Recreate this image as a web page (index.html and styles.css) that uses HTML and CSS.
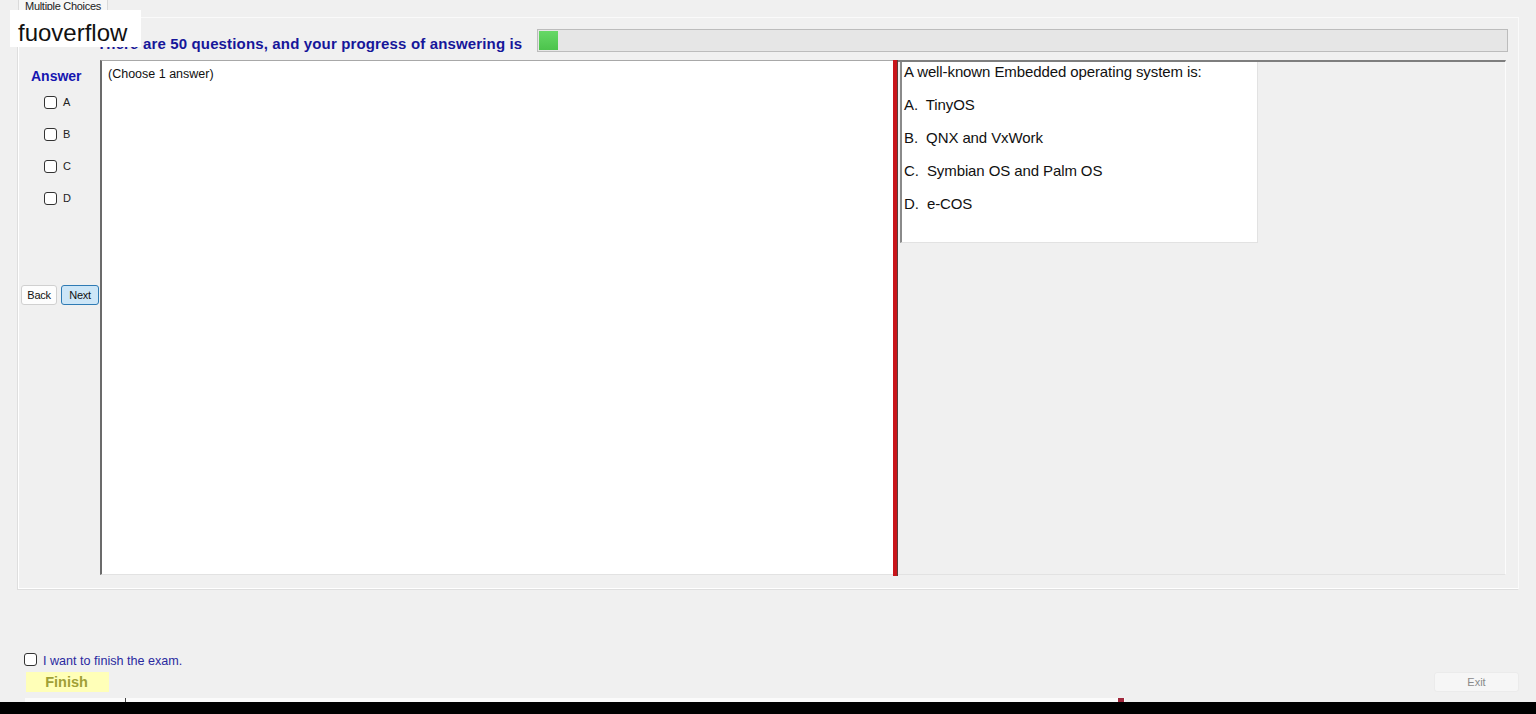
FILE: index.html
```html
<!DOCTYPE html>
<html>
<head>
<meta charset="utf-8">
<title>Multiple Choices</title>
<link rel="stylesheet" href="styles.css">
</head>
<body>
<div class="app">
  <div class="tabstrip"><div class="tab">Multiple Choices</div></div>
  <div class="tabpage">
    <div class="header">
      <div class="title">There are 50 questions, and your progress of answering is</div>
      <div class="progress"><div class="progress-fill" style="width:2%"></div></div>
    </div>
    <div class="main">
      <div class="answers">
        <div class="answer-title">Answer</div>
        <div class="opt"><span class="box"></span><span>A</span></div>
        <div class="opt"><span class="box"></span><span>B</span></div>
        <div class="opt"><span class="box"></span><span>C</span></div>
        <div class="opt"><span class="box"></span><span>D</span></div>
        <div class="nav">
          <button class="btn back">Back</button>
          <button class="btn next">Next</button>
        </div>
      </div>
      <div class="content">(Choose 1 answer)</div>
      <div class="splitter"></div>
      <div class="question-pane">
        <div class="question">
          <p>A well-known Embedded operating system is:</p>
          <p>A.&nbsp; TinyOS</p>
          <p>B.&nbsp; QNX and VxWork</p>
          <p>C.&nbsp; Symbian OS and Palm OS</p>
          <p>D.&nbsp; e-COS</p>
        </div>
      </div>
    </div>
  </div>
  <div class="footer">
    <div class="finish-check"><span class="box"></span><span class="finish-label">I want to finish the exam.</span></div>
    <div class="footer-buttons">
      <button class="finish">Finish</button>
      <button class="exit">Exit</button>
    </div>
  </div>
  <div class="strip"><span class="tick"></span><span class="dot"></span></div>
  <div class="blackbar"></div>
</div>
<div class="watermark">fuoverflow</div>
</body>
</html>
```
FILE: styles.css
```css
* { box-sizing: border-box; }
html, body { margin: 0; padding: 0; }
body {
  background: #f0f0f0;
  font-family: "Liberation Sans", Arial, sans-serif;
  width: 1536px;
  height: 714px;
  overflow: hidden;
  position: relative;
}
.app {
  display: flex;
  flex-direction: column;
  height: 714px;
}
.tabstrip {
  height: 17px;
  display: flex;
  align-items: flex-start;
}
.tab {
  margin-left: 18px;
  width: 90px;
  height: 15px;
  background: #f7f7f7;
  border: 1px solid #dadada;
  border-top: none;
  border-bottom: none;
  font-size: 11px;
  line-height: 12px;
  color: #222;
  text-align: center;
  letter-spacing: -0.3px;
  overflow: hidden;
}
.tabpage {
  margin-left: 17px;
  width: 1502px;
  height: 573px;
  border: 1px solid #fafafa;
  border-left-color: #dedede;
  border-bottom-color: #dedede;
  box-shadow: inset 1px 0 #fff, inset 0 -1px #fff;
  display: flex;
  flex-direction: column;
}
.header {
  display: flex;
  align-items: center;
  height: 23px;
  margin-top: 11px;
  padding-left: 79px;
  padding-right: 10px;
}
.title {
  flex: none;
  width: 440px;
  font-size: 15px;
  font-weight: bold;
  letter-spacing: 0.15px;
  color: #16169a;
  white-space: nowrap;
  margin-top: 6px;
}
.progress {
  flex: 1;
  height: 23px;
  background: #e6e6e6;
  border: 1px solid #bcbcbc;
  padding: 1px;
}
.progress-fill {
  height: 100%;
  background: linear-gradient(#66d866, #4cc34c);
}
.main {
  display: flex;
  margin-top: 8px;
  height: 515px;
  margin-right: 12px;
}
.answers {
  width: 82px;
  display: flex;
  flex-direction: column;
}
.answer-title {
  font-size: 14px;
  font-weight: bold;
  color: #1616b0;
  line-height: 18px;
  margin-top: 7px;
  margin-bottom: 1px;
  padding-left: 13px;
}
.opt {
  height: 32px;
  display: flex;
  align-items: center;
  padding-left: 26px;
  font-size: 11px;
  color: #222;
}
.box {
  display: inline-block;
  width: 13px;
  height: 13px;
  border: 1px solid #333;
  border-radius: 3px;
  background: #fff;
  margin-right: 6px;
  flex: none;
}
.nav {
  display: flex;
  gap: 4px;
  margin-top: 71px;
  padding-left: 3px;
}
.btn {
  height: 20px;
  padding: 0;
  font-family: "Liberation Sans", Arial, sans-serif;
  font-size: 11px;
  color: #111;
  border-radius: 3px;
  letter-spacing: -0.3px;
}
.back {
  width: 36px;
  background: #fdfdfd;
  border: 1px solid #d0d0d0;
}
.next {
  width: 38px;
  background: #cde6f7;
  border: 1px solid #2f7bb4;
}
.content {
  width: 793px;
  background: #fff;
  border-left: 2px solid #6b6b6b;
  border-top: 1px solid #a8a8a8;
  border-bottom: 1px solid #e2e2e2;
  font-size: 12.5px;
  color: #111;
  padding: 6px 0 0 6px;
  line-height: 14px;
}
.splitter {
  width: 5px;
  background: #c8151b;
  border-right: 1px solid #5e3a3a;
  height: 516px;
}
.question-pane {
  flex: 1;
  border-top: 2px solid #7e7e7e;
  border-right: 1px solid #fcfcfc;
  border-bottom: 1px solid #e2e2e2;
  padding-left: 2px;
}
.question {
  width: 358px;
  height: 181px;
  background: #fff;
  border-left: 2px solid #8a8a8a;
  border-right: 1px solid #e2e2e2;
  border-bottom: 1px solid #e2e2e2;
  padding: 1px 0 0 2px;
  font-size: 15px;
  letter-spacing: -0.1px;
  color: #111;
}
.question p {
  margin: 0 0 16px;
  line-height: 17px;
  white-space: nowrap;
}
.footer {
  height: 106px;
  display: flex;
  flex-direction: column;
  padding-top: 62px;
}
.finish-check {
  display: flex;
  align-items: center;
  padding-left: 24px;
  height: 14px;
}
.finish-label {
  font-size: 12.6px;
  color: #2a2aa0;
  margin-top: 3px;
}
.footer-buttons {
  display: flex;
  justify-content: space-between;
  margin-top: 6px;
  padding-left: 26px;
  padding-right: 17px;
}
.finish {
  width: 83px;
  height: 20px;
  background: #ffffb8;
  border: none;
  padding: 0 2px 0 0;
  font-family: "Liberation Sans", Arial, sans-serif;
  font-size: 14.5px;
  font-weight: bold;
  color: #a0a036;
}
.exit {
  width: 85px;
  height: 20px;
  background: #f6f6f6;
  border: 1px solid #ebebeb;
  border-radius: 3px;
  padding: 0;
  font-family: "Liberation Sans", Arial, sans-serif;
  font-size: 11px;
  color: #8a8a8a;
}
.strip {
  height: 4px;
  margin-top: 2px;
  margin-left: 25px;
  width: 1100px;
  background: #fbfbfb;
  position: relative;
}
.tick {
  position: absolute;
  left: 100px;
  top: 0;
  width: 1px;
  height: 4px;
  background: #444;
}
.dot {
  position: absolute;
  left: 1093px;
  top: 0;
  width: 6px;
  height: 4px;
  background: #a0283c;
}
.blackbar {
  flex: 1;
  background: #000;
}
.watermark {
  position: absolute;
  left: 10px;
  top: 10px;
  width: 131px;
  height: 37px;
  background: #fff;
  font-size: 24px;
  color: #111;
  padding-left: 8px;
  line-height: 37px;
  padding-top: 4px;
}
```
